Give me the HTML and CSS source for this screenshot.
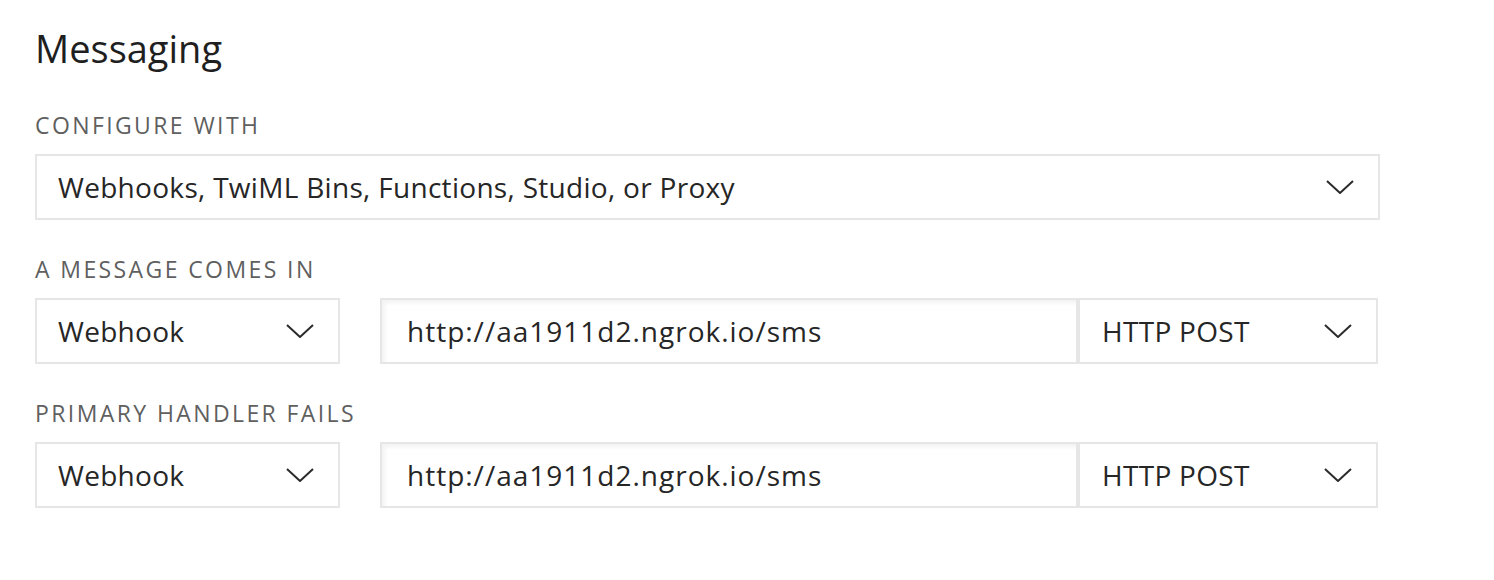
FILE: index.html
```html
<!DOCTYPE html>
<html>
<head>
<meta charset="utf-8">
<link rel="stylesheet" href="styles.css">
</head>
<body>
<section class="panel">
  <h1 class="title">Messaging</h1>

  <div class="field">
    <div class="label">Configure with</div>
    <div class="row">
      <div class="select wide">
        <span class="value">Webhooks, TwiML Bins, Functions, Studio, or Proxy</span>
        <svg class="chev" viewBox="0 0 28 14"><path d="M1 1 L14 13 L27 1" /></svg>
      </div>
    </div>
  </div>

  <div class="field">
    <div class="label">A message comes in</div>
    <div class="row">
      <div class="select kind">
        <span class="value">Webhook</span>
        <svg class="chev" viewBox="0 0 28 14"><path d="M1 1 L14 13 L27 1" /></svg>
      </div>
      <div class="input">http://aa1911d2.ngrok.io/sms</div>
      <div class="select method">
        <span class="value">HTTP POST</span>
        <svg class="chev" viewBox="0 0 28 14"><path d="M1 1 L14 13 L27 1" /></svg>
      </div>
    </div>
  </div>

  <div class="field">
    <div class="label">Primary handler fails</div>
    <div class="row">
      <div class="select kind">
        <span class="value">Webhook</span>
        <svg class="chev" viewBox="0 0 28 14"><path d="M1 1 L14 13 L27 1" /></svg>
      </div>
      <div class="input">http://aa1911d2.ngrok.io/sms</div>
      <div class="select method">
        <span class="value">HTTP POST</span>
        <svg class="chev" viewBox="0 0 28 14"><path d="M1 1 L14 13 L27 1" /></svg>
      </div>
    </div>
  </div>
</section>
</body>
</html>
```

FILE: styles.css
```css
html, body {
  margin: 0;
  padding: 0;
  background: #ffffff;
}

body {
  font-family: "Open Sans", Lato, "Liberation Sans", sans-serif;
  color: #262626;
}

.panel {
  padding: 24px 0 0 35px;
}

.title {
  margin: 0;
  font-size: 38px;
  font-weight: 400;
  line-height: 48px;
  color: #1f1f1f;
}

.field {
  margin-top: 38px;
}

.field + .field {
  margin-top: 34px;
}

.label {
  font-size: 23px;
  line-height: 30px;
  letter-spacing: 2.4px;
  text-transform: uppercase;
  color: #5f5f5f;
  margin-bottom: 14px;
}

.row {
  display: flex;
  align-items: stretch;
}

.select, .input {
  box-sizing: border-box;
  height: 66px;
  border: 2px solid #e6e6e6;
  background: #fff;
  display: flex;
  align-items: center;
  font-size: 28px;
  letter-spacing: 0.3px;
  color: #262626;
}

.select {
  justify-content: space-between;
  padding: 0 24px 0 21px;
}

.select.wide {
  width: 1345px;
}

.select.kind {
  width: 305px;
}

.input {
  width: 698px;
  margin-left: 40px;
  padding-left: 25px;
  letter-spacing: 1px;
  box-shadow: inset 3px 3px 4px rgba(0, 0, 0, 0.05);
}

.select.method {
  width: 300px;
  padding-left: 22px;
  padding-right: 24px;
}

.chev {
  width: 28px;
  height: 14px;
  flex: none;
}

.chev path {
  fill: none;
  stroke: #2b2b2b;
  stroke-width: 2;
}
```
